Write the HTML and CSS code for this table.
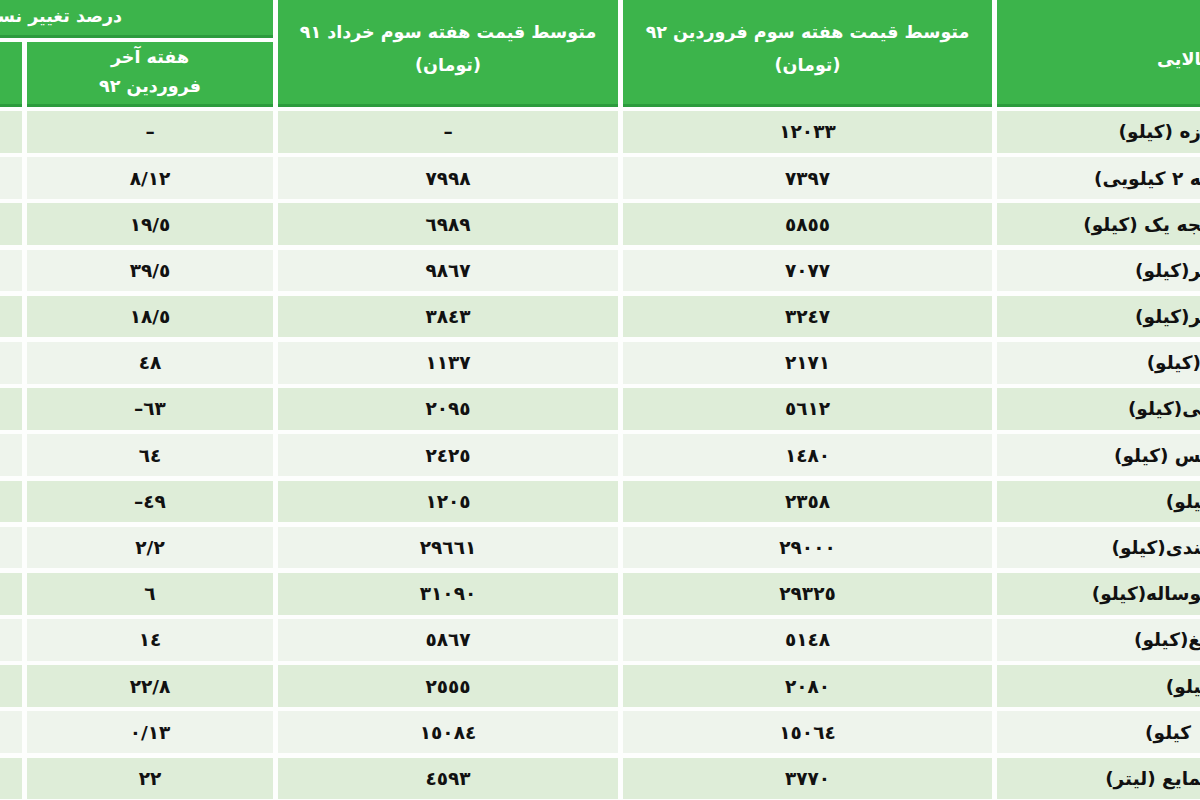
FILE: index.html
```html
<!DOCTYPE html>
<html lang="fa">
<head>
<meta charset="utf-8">
<title>جدول قیمت کالاها</title>
<link rel="stylesheet" href="styles.css">
</head>
<body>
<div class="frame">
  <div class="sheet">
    <div class="hd hd-item"><span class="hd-item-text">&zwj;الایی</span></div>
    <div class="hd hd-d"><span>متوسط قیمت هفته سوم فروردین ۹۲</span><span>(تومان)</span></div>
    <div class="hd hd-c"><span>متوسط قیمت هفته سوم خرداد ۹۱</span><span>(تومان)</span></div>
    <div class="hd hd-group"><span>درصد تغییر نسبت به</span></div>
    <div class="hd hd-b"><span>هفته آخر</span><span>فروردین ۹۲</span></div>
    <div class="hd hd-a"></div>

    <div class="tbody">
      <div class="row"><div class="cell label">زه (کیلو)</div><div class="cell num">١٢٠٣٣</div><div class="cell num">–</div><div class="cell num">–</div><div class="cell num"></div></div>
      <div class="row"><div class="cell label">&zwj;ه ٢ کیلویی)</div><div class="cell num">٧٣٩٧</div><div class="cell num">٧٩٩٨</div><div class="cell num">٨/١٢</div><div class="cell num"></div></div>
      <div class="row"><div class="cell label">&zwj;جه یک (کیلو)</div><div class="cell num">٥٨٥٥</div><div class="cell num">٦٩٨٩</div><div class="cell num">١٩/٥</div><div class="cell num"></div></div>
      <div class="row"><div class="cell label">&zwj;ر(کیلو)</div><div class="cell num">٧٠٧٧</div><div class="cell num">٩٨٦٧</div><div class="cell num">٣٩/٥</div><div class="cell num"></div></div>
      <div class="row"><div class="cell label">&zwj;ر(کیلو)</div><div class="cell num">٣٢٤٧</div><div class="cell num">٣٨٤٣</div><div class="cell num">١٨/٥</div><div class="cell num"></div></div>
      <div class="row"><div class="cell label">(کیلو)</div><div class="cell num">٢١٧١</div><div class="cell num">١١٣٧</div><div class="cell num">٤٨</div><div class="cell num"></div></div>
      <div class="row"><div class="cell label">&zwj;ی(کیلو)</div><div class="cell num">٥٦١٢</div><div class="cell num">٢٠٩٥</div><div class="cell num">–٦٣</div><div class="cell num"></div></div>
      <div class="row"><div class="cell label">&zwj;س (کیلو)</div><div class="cell num">١٤٨٠</div><div class="cell num">٢٤٢٥</div><div class="cell num">٦٤</div><div class="cell num"></div></div>
      <div class="row"><div class="cell label">&zwj;یلو)</div><div class="cell num">٢٣٥٨</div><div class="cell num">١٢٠٥</div><div class="cell num">–٤٩</div><div class="cell num"></div></div>
      <div class="row"><div class="cell label">&zwj;ندی(کیلو)</div><div class="cell num">٢٩٠٠٠</div><div class="cell num">٢٩٦٦١</div><div class="cell num">٢/٢</div><div class="cell num"></div></div>
      <div class="row"><div class="cell label">&zwj;وساله(کیلو)</div><div class="cell num">٢٩٣٢٥</div><div class="cell num">٣١٠٩٠</div><div class="cell num">٦</div><div class="cell num"></div></div>
      <div class="row"><div class="cell label">&zwj;غ(کیلو)</div><div class="cell num">٥١٤٨</div><div class="cell num">٥٨٦٧</div><div class="cell num">١٤</div><div class="cell num"></div></div>
      <div class="row"><div class="cell label">&zwj;یلو)</div><div class="cell num">٢٠٨٠</div><div class="cell num">٢٥٥٥</div><div class="cell num">٢٢/٨</div><div class="cell num"></div></div>
      <div class="row"><div class="cell label label-gap">کیلو)</div><div class="cell num">١٥٠٦٤</div><div class="cell num">١٥٠٨٤</div><div class="cell num">٠/١٣</div><div class="cell num"></div></div>
      <div class="row"><div class="cell label">&zwj;مایع (لیتر)</div><div class="cell num">٣٧٧٠</div><div class="cell num">٤٥٩٣</div><div class="cell num">٢٢</div><div class="cell num"></div></div>
    </div>
  </div>
</div>
</body>
</html>
```

FILE: styles.css
```css
html, body {
  margin: 0;
  padding: 0;
  background: #ffffff;
}

body {
  overflow: hidden;
  font-family: "DejaVu Sans", "Noto Sans", sans-serif;
}

.frame {
  direction: rtl;
  width: 1200px;
  height: 800px;
  overflow: hidden;
  background: #fdfefd;
}

.sheet {
  display: grid;
  direction: rtl;
  width: 1339px;
  margin-right: -1px;
  margin-top: -4px;
  grid-template-columns: 204px 369px 340px 246px 160px;
  grid-template-rows: 41.5px 64.5px;
  grid-auto-rows: 41.7px;
  column-gap: 5px;
  row-gap: 4.5px;
}

.tbody,
.row {
  display: contents;
}

.hd {
  background: #3cb44b;
  border-bottom: 3px solid #2c9b3d;
  color: #ffffff;
  font-weight: 700;
  font-size: 17.5px;
  line-height: 33px;
  display: flex;
  flex-direction: column;
  align-items: center;
  justify-content: center;
  text-align: center;
  box-sizing: border-box;
}

.hd-item {
  grid-column: 1;
  grid-row: 1 / span 2;
  align-items: flex-start;
  padding-top: 20px;
}

.hd-item-text {
  display: block;
}

.hd-d {
  grid-column: 2;
  grid-row: 1 / span 2;
  padding-bottom: 2px;
}

.hd-c {
  grid-column: 3;
  grid-row: 1 / span 2;
  padding-bottom: 2px;
}

.hd-group {
  grid-column: 4 / span 2;
  grid-row: 1;
  align-items: flex-start;
  padding-right: 151px;
  padding-top: 2px;
  white-space: nowrap;
}

.hd-b {
  grid-column: 4;
  grid-row: 2;
  line-height: 29px;
  padding-bottom: 2px;
}

.hd-a {
  grid-column: 5;
  grid-row: 2;
}

.cell {
  background: #eef4ec;
  color: #111111;
  font-weight: 700;
  font-size: 18.5px;
  display: flex;
  align-items: center;
  white-space: nowrap;
}

.row:nth-child(odd) > .cell {
  background: #deedd8;
}

.label {
  justify-content: flex-start;
  padding-right: 0;
}

.label-gap {
  padding-right: 10px;
}

.num {
  direction: ltr;
  justify-content: center;
}
```
